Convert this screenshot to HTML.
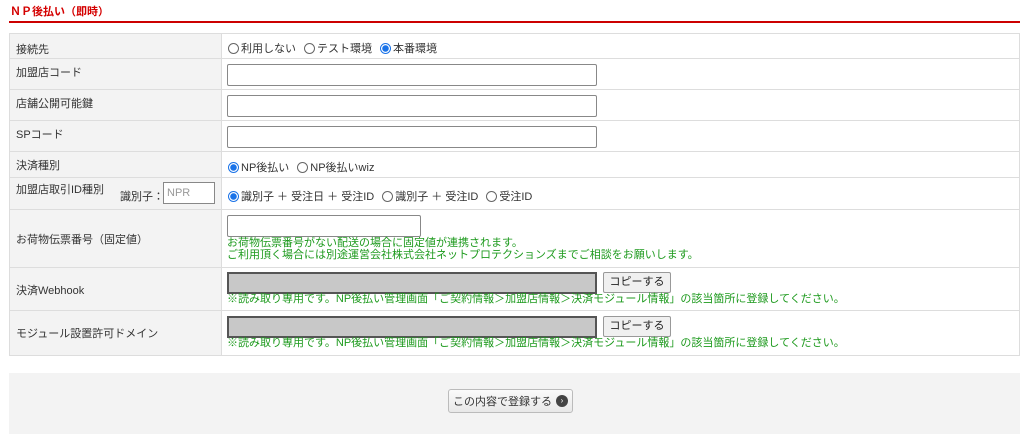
<!DOCTYPE html>
<html><head><meta charset="utf-8"><style>
*{box-sizing:border-box;margin:0;padding:0}
body{width:1024px;height:434px;background:#fff;font-family:"Liberation Sans","Noto Sans CJK JP",sans-serif;font-size:11px;color:#333;position:relative;overflow:hidden}
.t{position:absolute;left:10px;top:3px;color:#d40000;font-weight:bold;font-size:11px}
.line{position:absolute;left:9px;top:21px;width:1011px;height:2px;background:#cc0000}
.row{position:absolute;left:9px;width:1011px;border:1px solid #ddd;border-top:none}
.lab{position:absolute;left:0;top:0;bottom:0;width:212px;background:#f3f3f3;border-right:1px solid #ddd;padding:5px 6px}
.val{position:absolute;left:218px;top:0;white-space:nowrap}
.in{position:absolute;left:217px;width:370px;height:22px;border:1px solid #888;background:#fff;border-radius:2px}
.ro{background:#c8c8c8;border:2px solid #555;border-radius:0}
.r{display:inline-block;width:11px;height:11px;border:1px solid #666;border-radius:50%;vertical-align:-2px;margin-right:2px;background:#fff}
.r.on{border-color:#1a73e8;background:radial-gradient(circle,#1a73e8 3px,#fff 3.5px)}
.opt{margin-right:8px}
.g{color:#1d9a1d;position:absolute;left:217px;font-size:11px;line-height:12px;white-space:nowrap}
.btn{position:absolute;left:593px;width:68px;height:21px;border:1px solid #999;background:#f0f0f0;border-radius:2px;font-size:11px;text-align:center;line-height:19px;color:#222}
</style></head><body>
<div class="t">ＮＰ後払い（即時）</div>
<div class="line"></div>
<div class="row" style="top:33px;height:26px;border-top:1px solid #ddd"><div class="lab" style="padding-top:7px">接続先</div><div class="val" style="top:6px"><span class="opt"><i class="r"></i>利用しない</span><span class="opt"><i class="r"></i>テスト環境</span><span><i class="r on"></i>本番環境</span></div></div>
<div class="row" style="top:59px;height:31px"><div class="lab">加盟店コード</div><div class="in" style="top:5px"></div></div>
<div class="row" style="top:90px;height:31px"><div class="lab">店舗公開可能鍵</div><div class="in" style="top:5px"></div></div>
<div class="row" style="top:121px;height:31px"><div class="lab">SPコード</div><div class="in" style="top:5px"></div></div>
<div class="row" style="top:152px;height:26px"><div class="lab">決済種別</div><div class="val" style="top:7px"><span class="opt"><i class="r on"></i>NP後払い</span><span><i class="r"></i>NP後払いwiz</span></div></div>
<div class="row" style="top:178px;height:32px"><div class="lab" style="padding-top:3px">加盟店取引ID種別<span style="position:absolute;left:110px;top:10px">識別子：</span><span style="position:absolute;left:153px;top:4px;width:52px;height:22px;border:1px solid #888;color:#999;padding:4px 3px;background:#fff">NPR</span></div><div class="val" style="top:10px"><span class="opt"><i class="r on"></i>識別子 ＋ 受注日 ＋ 受注ID</span><span class="opt"><i class="r"></i>識別子 ＋ 受注ID</span><span><i class="r"></i>受注ID</span></div></div>
<div class="row" style="top:210px;height:58px"><div class="lab" style="padding-top:21px">お荷物伝票番号（固定値）</div><div class="in" style="top:5px;width:194px"></div><div class="g" style="top:27px">お荷物伝票番号がない配送の場合に固定値が連携されます。<br>ご利用頂く場合には別途運営会社株式会社ネットプロテクションズまでご相談をお願いします。</div></div>
<div class="row" style="top:268px;height:43px"><div class="lab" style="padding-top:14px">決済Webhook</div><div class="in ro" style="top:4px"></div><div class="btn" style="top:4px">コピーする</div><div class="g" style="top:25px">※読み取り専用です。NP後払い管理画面「ご契約情報＞加盟店情報＞決済モジュール情報」の該当箇所に登録してください。</div></div>
<div class="row" style="top:311px;height:45px"><div class="lab" style="padding-top:14px">モジュール設置許可ドメイン</div><div class="in ro" style="top:5px"></div><div class="btn" style="top:5px">コピーする</div><div class="g" style="top:26px">※読み取り専用です。NP後払い管理画面「ご契約情報＞加盟店情報＞決済モジュール情報」の該当箇所に登録してください。</div></div>
<div style="position:absolute;left:9px;top:373px;width:1011px;height:61px;background:#f3f3f3"></div>
<div style="position:absolute;left:448px;top:389px;width:125px;height:24px;border:1px solid #bbb;border-radius:3px;background:linear-gradient(#fafafa,#e8e8e8);font-size:11px;color:#333;white-space:nowrap;display:flex;align-items:center;justify-content:center;gap:4px">この内容で登録する<span style="display:inline-block;width:12px;height:12px;border-radius:50%;background:#444;color:#fff;font-size:8px;line-height:12px;text-align:center">›</span></div>
</body></html>
